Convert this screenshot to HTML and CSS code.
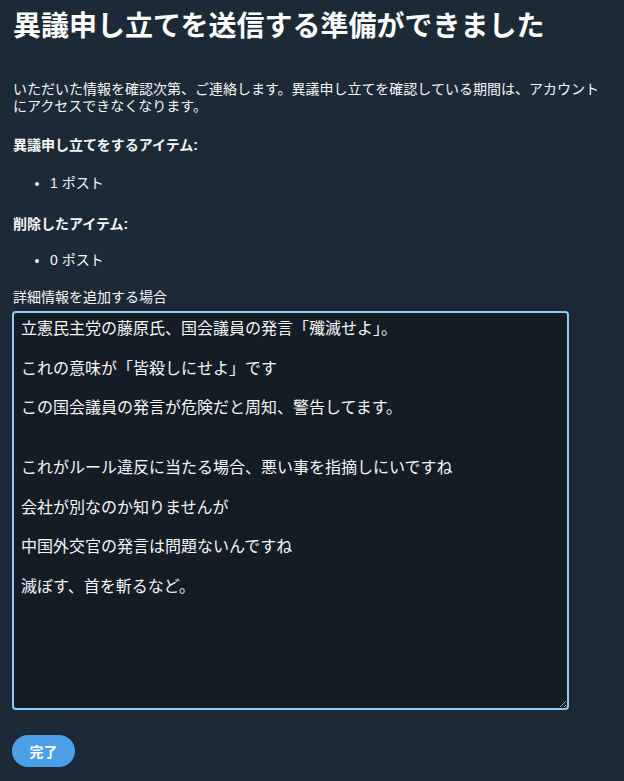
FILE: index.html
```html
<!DOCTYPE html>
<html lang="ja">
<head>
<meta charset="utf-8">
<link rel="stylesheet" href="styles.css">
</head>
<body>
<main class="page">
  <h1 class="title">異議申し立てを送信する準備ができました</h1>
  <p class="intro">いただいた情報を確認次第、ご連絡します。異議申し立てを確認している期間は、アカウントにアクセスできなくなります。</p>
  <p class="label label-first">異議申し立てをするアイテム:</p>
  <ul class="items items-first"><li>1 ポスト</li></ul>
  <p class="label label-second">削除したアイテム:</p>
  <ul class="items items-second"><li>0 ポスト</li></ul>
  <label class="field-label" for="details">詳細情報を追加する場合</label>
  <textarea id="details" class="details">立憲民主党の藤原氏、国会議員の発言「殲滅せよ」。

これの意味が「皆殺しにせよ」です

この国会議員の発言が危険だと周知、警告してます。


これがルール違反に当たる場合、悪い事を指摘しにいですね

会社が別なのか知りませんが

中国外交官の発言は問題ないんですね

滅ぼす、首を斬るなど。</textarea>
  <div class="actions"><button class="done" type="button">完了</button></div>
</main>
</body>
</html>
```

FILE: styles.css
```css
html, body {
  margin: 0;
  padding: 0;
  background: #1c2937;
  height: 100%;
}
body {
  font-family: "Liberation Sans", "Noto Sans CJK JP", sans-serif;
  color: #f5f7f8;
  font-size: 14px;
  line-height: 17px;
}
.page {
  padding: 10px 13px 0 13px;
}
.title {
  margin: 0;
  font-size: 28px;
  line-height: 34px;
  font-weight: 700;
  color: #ffffff;
}
.intro {
  margin: 37px 0 0 0;
  padding-right: 10px;
}
.label {
  margin: 0;
  font-weight: 700;
}
.label-first { margin-top: 22px; }
.label-second { margin-top: 24px; }
.items {
  margin: 0;
  padding-left: 37px;
}
.items li {
  line-height: 17px;
}
.items-first { margin-top: 21px; }
.items-second { margin-top: 19px; }
.field-label {
  display: block;
  margin-top: 20px;
  color: #f5f7f8;
}
.details {
  display: block;
  box-sizing: border-box;
  margin: 5px 0 0 -1px;
  width: 557px;
  height: 399px;
  padding: 6px 7px;
  background: #141c26;
  border: 2px solid #8ecdf8;
  border-radius: 4px;
  color: #f5f7f8;
  font-family: "Liberation Sans", "Noto Sans CJK JP", sans-serif;
  font-size: 16px;
  line-height: 19.85px;
  outline: none;
  overflow: hidden;
}
.actions {
  margin-top: 25px;
}
.done {
  margin-left: -1px;
  height: 32px;
  width: 63px;
  padding: 0;
  border: none;
  border-radius: 16px;
  background: #4a9fe6;
  color: #ffffff;
  font-family: "Liberation Sans", "Noto Sans CJK JP", sans-serif;
  font-size: 14px;
  font-weight: 700;
}
```
